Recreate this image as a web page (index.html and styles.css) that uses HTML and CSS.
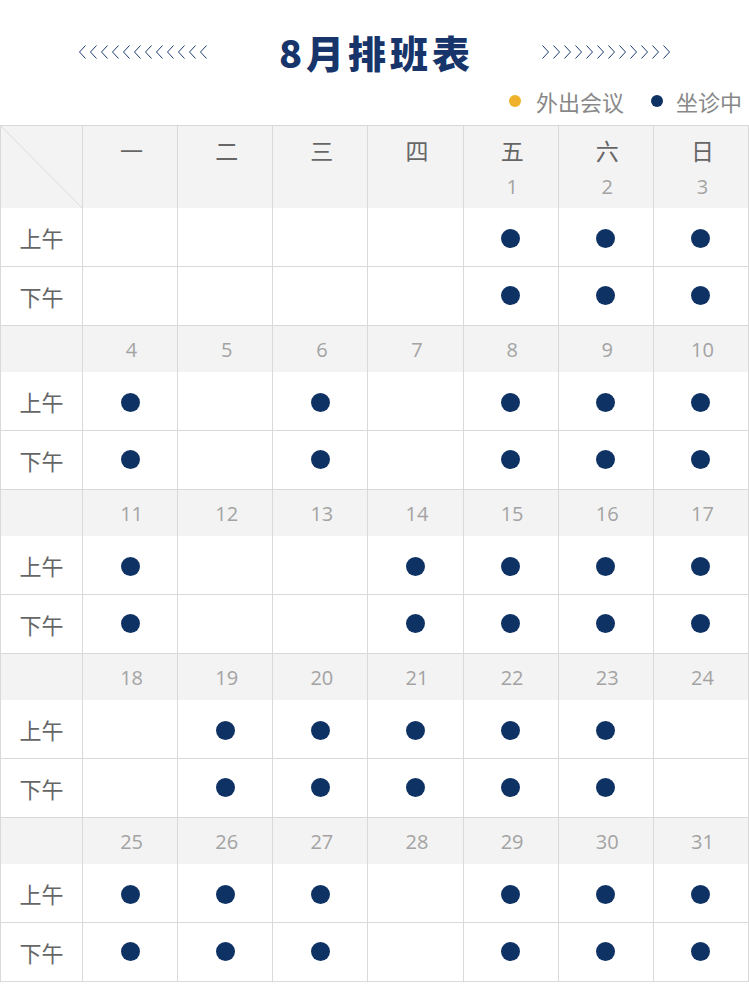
FILE: index.html
```html
<!DOCTYPE html>
<html lang="zh">
<head>
<meta charset="utf-8">
<title>8月排班表</title>
<link rel="stylesheet" href="styles.css">
</head>
<body>
<div class="page">
  <header class="head">
    <svg class="chev" width="128" height="14" viewBox="0 0 128 14" fill="none" stroke="#1f3c70" stroke-width="1">
      <path d="M6.5 0.5L0.5 7L6.5 13.5M17.5 0.5L11.5 7L17.5 13.5M28.5 0.5L22.5 7L28.5 13.5M39.5 0.5L33.5 7L39.5 13.5M50.5 0.5L44.5 7L50.5 13.5M61.5 0.5L55.5 7L61.5 13.5M72.5 0.5L66.5 7L72.5 13.5M83.5 0.5L77.5 7L83.5 13.5M94.5 0.5L88.5 7L94.5 13.5M105.5 0.5L99.5 7L105.5 13.5M116.5 0.5L110.5 7L116.5 13.5M127.5 0.5L121.5 7L127.5 13.5"/>
    </svg>
    <h1 class="title">8月排班表</h1>
    <svg class="chev" width="128" height="14" viewBox="0 0 128 14" fill="none" stroke="#1f3c70" stroke-width="1">
      <path d="M0.5 0.5L6.5 7L0.5 13.5M11.5 0.5L17.5 7L11.5 13.5M22.5 0.5L28.5 7L22.5 13.5M33.5 0.5L39.5 7L33.5 13.5M44.5 0.5L50.5 7L44.5 13.5M55.5 0.5L61.5 7L55.5 13.5M66.5 0.5L72.5 7L66.5 13.5M77.5 0.5L83.5 7L77.5 13.5M88.5 0.5L94.5 7L88.5 13.5M99.5 0.5L105.5 7L99.5 13.5M110.5 0.5L116.5 7L110.5 13.5M121.5 0.5L127.5 7L121.5 13.5"/>
    </svg>
  </header>
  <div class="legend">
    <span class="ldot yellow"></span><span class="ltext">外出会议</span>
    <span class="ldot navy"></span><span class="ltext">坐诊中</span>
  </div>

  <div class="table">
    <div class="row top">
      <div class="cell corner"></div>
      <div class="cell"><span class="wd">一</span><span class="num"></span></div>
      <div class="cell"><span class="wd">二</span><span class="num"></span></div>
      <div class="cell"><span class="wd">三</span><span class="num"></span></div>
      <div class="cell"><span class="wd">四</span><span class="num"></span></div>
      <div class="cell"><span class="wd">五</span><span class="num">1</span></div>
      <div class="cell"><span class="wd">六</span><span class="num">2</span></div>
      <div class="cell"><span class="wd">日</span><span class="num">3</span></div>
    </div>
    <div class="row slot am">
      <div class="cell label">上午</div>
      <div class="cell"></div><div class="cell"></div><div class="cell"></div><div class="cell"></div>
      <div class="cell"><i class="dot"></i></div><div class="cell"><i class="dot"></i></div><div class="cell"><i class="dot"></i></div>
    </div>
    <div class="row slot pm">
      <div class="cell label">下午</div>
      <div class="cell"></div><div class="cell"></div><div class="cell"></div><div class="cell"></div>
      <div class="cell"><i class="dot"></i></div><div class="cell"><i class="dot"></i></div><div class="cell"><i class="dot"></i></div>
    </div>

    <div class="row date">
      <div class="cell"></div>
      <div class="cell">4</div><div class="cell">5</div><div class="cell">6</div><div class="cell">7</div><div class="cell">8</div><div class="cell">9</div><div class="cell">10</div>
    </div>
    <div class="row slot am">
      <div class="cell label">上午</div>
      <div class="cell"><i class="dot"></i></div><div class="cell"></div><div class="cell"><i class="dot"></i></div><div class="cell"></div>
      <div class="cell"><i class="dot"></i></div><div class="cell"><i class="dot"></i></div><div class="cell"><i class="dot"></i></div>
    </div>
    <div class="row slot pm">
      <div class="cell label">下午</div>
      <div class="cell"><i class="dot"></i></div><div class="cell"></div><div class="cell"><i class="dot"></i></div><div class="cell"></div>
      <div class="cell"><i class="dot"></i></div><div class="cell"><i class="dot"></i></div><div class="cell"><i class="dot"></i></div>
    </div>

    <div class="row date">
      <div class="cell"></div>
      <div class="cell">11</div><div class="cell">12</div><div class="cell">13</div><div class="cell">14</div><div class="cell">15</div><div class="cell">16</div><div class="cell">17</div>
    </div>
    <div class="row slot am">
      <div class="cell label">上午</div>
      <div class="cell"><i class="dot"></i></div><div class="cell"></div><div class="cell"></div><div class="cell"><i class="dot"></i></div>
      <div class="cell"><i class="dot"></i></div><div class="cell"><i class="dot"></i></div><div class="cell"><i class="dot"></i></div>
    </div>
    <div class="row slot pm">
      <div class="cell label">下午</div>
      <div class="cell"><i class="dot"></i></div><div class="cell"></div><div class="cell"></div><div class="cell"><i class="dot"></i></div>
      <div class="cell"><i class="dot"></i></div><div class="cell"><i class="dot"></i></div><div class="cell"><i class="dot"></i></div>
    </div>

    <div class="row date">
      <div class="cell"></div>
      <div class="cell">18</div><div class="cell">19</div><div class="cell">20</div><div class="cell">21</div><div class="cell">22</div><div class="cell">23</div><div class="cell">24</div>
    </div>
    <div class="row slot am">
      <div class="cell label">上午</div>
      <div class="cell"></div><div class="cell"><i class="dot"></i></div><div class="cell"><i class="dot"></i></div><div class="cell"><i class="dot"></i></div>
      <div class="cell"><i class="dot"></i></div><div class="cell"><i class="dot"></i></div><div class="cell"></div>
    </div>
    <div class="row slot pm">
      <div class="cell label">下午</div>
      <div class="cell"></div><div class="cell"><i class="dot"></i></div><div class="cell"><i class="dot"></i></div><div class="cell"><i class="dot"></i></div>
      <div class="cell"><i class="dot"></i></div><div class="cell"><i class="dot"></i></div><div class="cell"></div>
    </div>

    <div class="row date">
      <div class="cell"></div>
      <div class="cell">25</div><div class="cell">26</div><div class="cell">27</div><div class="cell">28</div><div class="cell">29</div><div class="cell">30</div><div class="cell">31</div>
    </div>
    <div class="row slot am">
      <div class="cell label">上午</div>
      <div class="cell"><i class="dot"></i></div><div class="cell"><i class="dot"></i></div><div class="cell"><i class="dot"></i></div><div class="cell"></div>
      <div class="cell"><i class="dot"></i></div><div class="cell"><i class="dot"></i></div><div class="cell"><i class="dot"></i></div>
    </div>
    <div class="row slot pm">
      <div class="cell label">下午</div>
      <div class="cell"><i class="dot"></i></div><div class="cell"><i class="dot"></i></div><div class="cell"><i class="dot"></i></div><div class="cell"></div>
      <div class="cell"><i class="dot"></i></div><div class="cell"><i class="dot"></i></div><div class="cell"><i class="dot"></i></div>
    </div>
  </div>
</div>
</body>
</html>
```

FILE: styles.css
```css
* { box-sizing: border-box; }
html, body { margin: 0; padding: 0; background: #fff; }
body {
  font-family: "Noto Sans CJK SC", "Open Sans", sans-serif;
  color: #666;
}
.page { width: 749px; }

.head {
  display: flex;
  align-items: center;
  justify-content: center;
  gap: 72px;
  height: 50px;
  margin-top: 27px;
}
.chev { display: block; flex: none; }
.title {
  margin: 0;
  font-family: "Noto Sans CJK SC", sans-serif;
  font-size: 38px;
  font-weight: 900;
  line-height: 50px;
  letter-spacing: 4px;
  margin-right: -4px;
  color: #17356b;
}

.legend {
  display: flex;
  justify-content: flex-end;
  align-items: center;
  height: 48px;
  padding-right: 7px;
  font-size: 22px;
  color: #888;
}
.ldot {
  width: 12px;
  height: 12px;
  border-radius: 50%;
  margin-right: 15px;
}
.ldot.yellow { background: #f0b22a; }
.ldot.navy { background: #0f3264; margin-left: 27px; margin-right: 13px; }
.ltext { line-height: 30px; }

.table {
  border-left: 1px solid #d9d9d9;
  border-top: 1px solid #d9d9d9;
  width: 749px;
}
.row {
  display: grid;
  grid-template-columns: 82px repeat(7, 1fr);
}
.cell {
  border-right: 1px solid #d9d9d9;
  display: flex;
  align-items: center;
  justify-content: center;
}
.row.top { height: 82px; background: #f3f3f3; }
.row.top .cell {
  flex-direction: column;
  justify-content: flex-start;
  padding-top: 9px;
  padding-left: 3px;
}
.wd {
  font-size: 23px;
  line-height: 30px;
  color: #666;
  height: 30px;
}
.num {
  font-family: "Open Sans", sans-serif;
  font-size: 20px;
  line-height: 26px;
  height: 26px;
  margin-top: 9px;
  color: #a3a3a3;
}
.row.top .cell.corner {
  padding: 0;
  background: linear-gradient(to top right, transparent calc(50% - 0.7px), #dcdcdc calc(50%), transparent calc(50% + 0.7px));
}
.row.date {
  height: 46px;
  background: #f3f3f3;
  font-family: "Open Sans", sans-serif;
  font-size: 20px;
  color: #a3a3a3;
}
.row.date .cell { padding-left: 3px; }
.row.slot { height: 59px; }
.row.slot .cell { border-bottom: 1px solid #d9d9d9; }
.row.am .cell { padding-top: 2px; }
.row.pm .cell { padding-bottom: 2px; }
.row.slot .cell.label { padding: 0; }
.label { font-size: 22px; color: #666; }
.dot {
  display: block;
  width: 19px;
  height: 19px;
  border-radius: 50%;
  background: #0f3264;
}
```
